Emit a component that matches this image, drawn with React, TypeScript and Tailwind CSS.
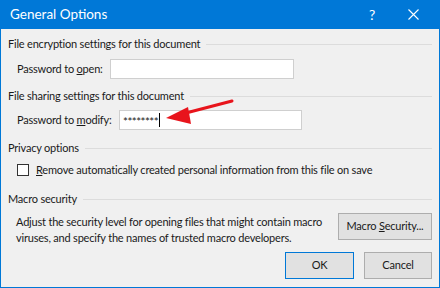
import React from 'react';

const Section: React.FC<{ title: string }> = ({ title }) => (
  <div className="flex items-center gap-[6px] h-[16px]">
    <span className="whitespace-nowrap">{title}</span>
    <div className="flex-1 h-px bg-[#dcdcdc]" />
  </div>
);

const Field: React.FC<{ label: React.ReactNode; labelW: string; inputW: string; value?: string }> = ({
  label,
  labelW,
  inputW,
  value,
}) => (
  <div className="flex items-center pl-[9px]">
    <span className={`${labelW} shrink-0 whitespace-nowrap`}>{label}</span>
    <div className={`${inputW} h-[20px] bg-white border border-[#cfcfcf] flex items-center px-[3px]`}>
      {value && (
        <>
          <span className="text-[11.5px] tracking-[-0.5px] leading-none mt-[3px]">{value}</span>
          <span className="w-px h-[14px] bg-black ml-px" />
        </>
      )}
    </div>
  </div>
);

const Btn: React.FC<{ children: React.ReactNode; w: string; primary?: boolean }> = ({ children, w, primary }) => (
  <div
    className={`${w} h-[27px] flex items-center justify-center bg-[#e1e1e1] border ${
      primary ? 'border-[#0078d7]' : 'border-[#adadad]'
    }`}
  >
    {children}
  </div>
);

export default function App() {
  return (
    <div
      className="w-[440px] h-[288px] bg-[#0078d7] px-px pb-px flex flex-col text-[11px] tracking-[-0.2px] text-[#1a1a1a] relative overflow-hidden"
      style={{ fontFamily: '"Segoe UI", Lato, sans-serif' }}
    >
      {/* Title bar */}
      <div className="h-[29px] flex items-center text-white shrink-0">
        <span className="pl-[9px] text-[13.5px] tracking-normal">General Options</span>
        <span className="ml-auto w-[30px] text-center text-[14px]">?</span>
        <span className="w-[52px] flex justify-center">
          <svg width="11" height="11" viewBox="0 0 11 11" stroke="white" strokeWidth="1.1">
            <path d="M0.5 0.5 L10.5 10.5 M10.5 0.5 L0.5 10.5" />
          </svg>
        </span>
      </div>

      {/* Body */}
      <div className="flex-1 bg-[#f0f0f0] pl-[7px] pr-[7px] pt-[7px] flex flex-col">
        <Section title="File encryption settings for this document" />
        <div className="mt-[7px]">
          <Field
            label={<>Password to <u>o</u>pen:</>}
            labelW="w-[93px]"
            inputW="w-[184px]"
          />
        </div>

        <div className="mt-[9px]">
          <Section title="File sharing settings for this document" />
        </div>
        <div className="mt-[6px]">
          <Field
            label={<>Password to <u>m</u>odify:</>}
            labelW="w-[102px]"
            inputW="w-[183px]"
            value="********"
          />
        </div>

        <div className="mt-[10px]">
          <Section title="Privacy options" />
        </div>
        <div className="mt-[6px] h-[16px] flex items-center pl-[9px]">
          <div className="w-[12px] h-[12px] border border-[#333] bg-white" />
          <span className="ml-[7px] whitespace-nowrap">
            <u>R</u>emove automatically created personal information from this file on save
          </span>
        </div>

        <div className="mt-[13px]">
          <Section title="Macro security" />
        </div>
        <div className="mt-[6px] flex items-start">
          <div className="pl-[8px] leading-[16px] pt-px whitespace-nowrap">
            Adjust the security level for opening files that might contain macro
            <br />
            viruses, and specify the names of trusted macro developers.
          </div>
          <div className="ml-auto">
            <Btn w="w-[94px]">
              Macro&nbsp;<u>S</u>ecurity...
            </Btn>
          </div>
        </div>

        <div className="mt-[6px] flex justify-end gap-[10px]">
          <Btn w="w-[69px]" primary>
            OK
          </Btn>
          <Btn w="w-[68px]">Cancel</Btn>
        </div>
      </div>

      {/* Red annotation arrow */}
      <svg className="absolute left-0 top-0 pointer-events-none" width="440" height="288">
        <line x1="232" y1="101" x2="182" y2="114" stroke="#e8141c" strokeWidth="3" strokeLinecap="round" />
        <polygon points="166,118 188,107 191,124" fill="#e8141c" />
      </svg>
    </div>
  );
}
